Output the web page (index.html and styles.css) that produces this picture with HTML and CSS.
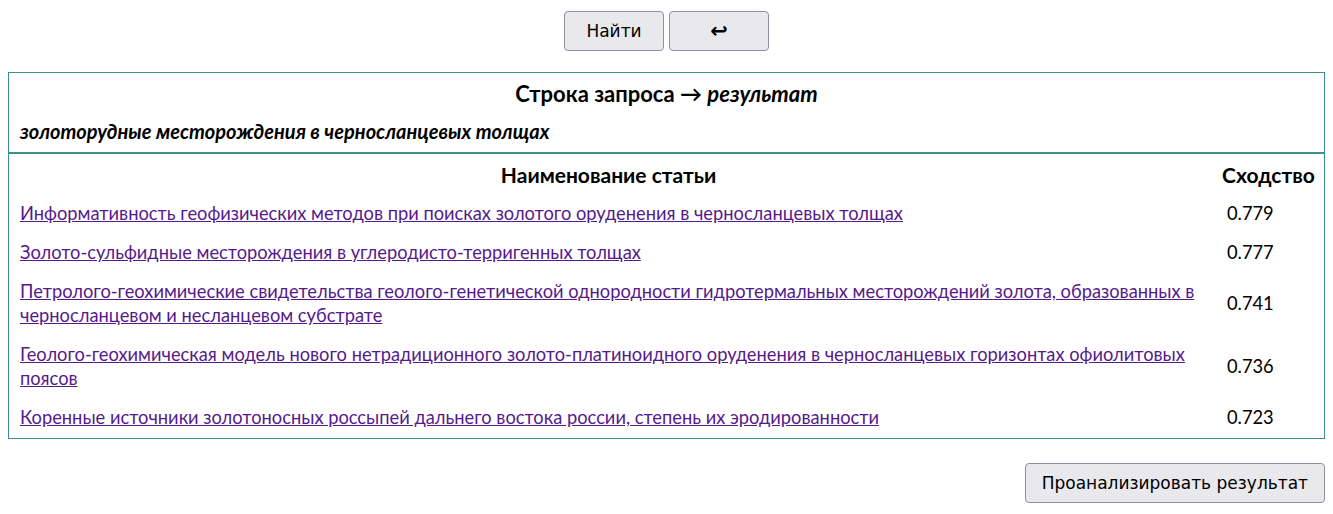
FILE: index.html
```html
<!DOCTYPE html>
<html lang="ru">
<head>
    <meta charset="UTF-8">
    <meta name="viewport" content="width=device-width, initial-scale=1.0">
    <title>Поиск статей</title>
    <link rel="stylesheet" href="styles.css">
</head>
<body>
    <div class="actions">
        <button class="btn">Найти</button>
        <button class="btn btn-back">&#x21A9;</button>
    </div>

    <div class="result-box">
        <div class="query-head">
            <h2>Строка запроса &#x2192; <i>результат</i></h2>
            <p class="query">золоторудные месторождения в черносланцевых толщах</p>
        </div>
        <table class="results">
            <thead>
                <tr>
                    <th class="col-title">Наименование статьи</th>
                    <th class="col-score">Сходство</th>
                </tr>
            </thead>
            <tbody>
                <tr>
                    <td><a href="#">Информативность геофизических методов при поисках золотого оруденения в черносланцевых толщах</a></td>
                    <td class="score">0.779</td>
                </tr>
                <tr>
                    <td><a href="#">Золото-сульфидные месторождения в углеродисто-терригенных толщах</a></td>
                    <td class="score">0.777</td>
                </tr>
                <tr>
                    <td><a href="#">Петролого-геохимические свидетельства геолого-генетической однородности гидротермальных месторождений золота, образованных в черносланцевом и несланцевом субстрате</a></td>
                    <td class="score">0.741</td>
                </tr>
                <tr>
                    <td><a href="#">Геолого-геохимическая модель нового нетрадиционного золото-платиноидного оруденения в черносланцевых горизонтах офиолитовых поясов</a></td>
                    <td class="score">0.736</td>
                </tr>
                <tr>
                    <td><a href="#">Коренные источники золотоносных россыпей дальнего востока россии, степень их эродированности</a></td>
                    <td class="score">0.723</td>
                </tr>
            </tbody>
        </table>
    </div>

    <div class="footer">
        <button class="btn btn-wide">Проанализировать результат</button>
    </div>
</body>
</html>
```

FILE: styles.css
```css
body {
    margin: 8px;
    font-family: Lato, "Open Sans", sans-serif;
    color: #000;
    background: #fff;
}
.actions {
    display: flex;
    justify-content: center;
    gap: 5px;
    margin-top: 3px;
}
.btn {
    font-family: "DejaVu Sans", sans-serif;
    font-size: 17px;
    width: 100px;
    height: 40px;
    background: #e9e9ed;
    border: 1px solid #8f8f9d;
    border-radius: 4px;
    color: #000;
    cursor: pointer;
}
.btn:hover {
    background: #d0d0d7;
}
.btn-back {
    font-size: 21px;
    font-weight: bold;
}
.result-box {
    margin-top: 21px;
    border: 1px solid #3e918a;
}
.query-head {
    padding: 7px 11px 9px;
    border-bottom: 2px solid #3e918a;
}
.query-head h2 {
    margin: 0;
    text-align: center;
    font-size: 22px;
    font-weight: bold;
}
.query {
    margin: 12px 0 0;
    font-size: 20px;
    font-weight: bold;
    font-style: italic;
}
.results {
    width: 100%;
    border-collapse: collapse;
}
.results th {
    font-size: 21px;
    padding: 8px 8px 6px;
}
.results td {
    font-size: 18.3px;
    line-height: 24px;
    padding: 8px 11px 7px;
    vertical-align: middle;
}
.results tr:last-child td {
    padding-bottom: 9px;
}
.results a {
    color: #551a8b;
}
.results th.col-score {
    width: 95px;
    padding-left: 13px;
}
.results td.score {
    padding-left: 19px;
}
.footer {
    display: flex;
    justify-content: flex-end;
    margin-top: 24px;
}
.btn-wide {
    width: auto;
    padding: 0 16px;
}
```
